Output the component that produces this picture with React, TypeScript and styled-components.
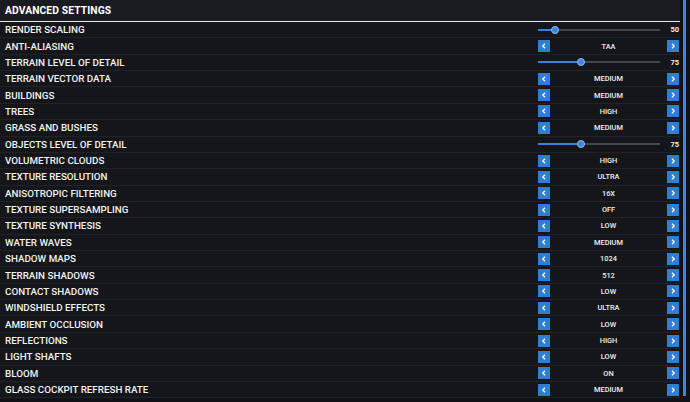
import React from "react";
import styled, { createGlobalStyle } from "styled-components";

const GlobalStyle = createGlobalStyle`
  html, body {
    margin: 0;
    padding: 0;
    background: #111215;
  }
  body {
    font-family: Roboto, "Liberation Sans", sans-serif;
    color: #fff;
  }
`;

type Setting =
  | { label: string; kind: "slider"; value: number; pos: number }
  | { label: string; kind: "select"; value: string };

const settings: Setting[] = [
  { label: "RENDER SCALING", kind: "slider", value: 50, pos: 14 },
  { label: "ANTI-ALIASING", kind: "select", value: "TAA" },
  { label: "TERRAIN LEVEL OF DETAIL", kind: "slider", value: 75, pos: 35.5 },
  { label: "TERRAIN VECTOR DATA", kind: "select", value: "MEDIUM" },
  { label: "BUILDINGS", kind: "select", value: "MEDIUM" },
  { label: "TREES", kind: "select", value: "HIGH" },
  { label: "GRASS AND BUSHES", kind: "select", value: "MEDIUM" },
  { label: "OBJECTS LEVEL OF DETAIL", kind: "slider", value: 75, pos: 35.5 },
  { label: "VOLUMETRIC CLOUDS", kind: "select", value: "HIGH" },
  { label: "TEXTURE RESOLUTION", kind: "select", value: "ULTRA" },
  { label: "ANISOTROPIC FILTERING", kind: "select", value: "16X" },
  { label: "TEXTURE SUPERSAMPLING", kind: "select", value: "OFF" },
  { label: "TEXTURE SYNTHESIS", kind: "select", value: "LOW" },
  { label: "WATER WAVES", kind: "select", value: "MEDIUM" },
  { label: "SHADOW MAPS", kind: "select", value: "1024" },
  { label: "TERRAIN SHADOWS", kind: "select", value: "512" },
  { label: "CONTACT SHADOWS", kind: "select", value: "LOW" },
  { label: "WINDSHIELD EFFECTS", kind: "select", value: "ULTRA" },
  { label: "AMBIENT OCCLUSION", kind: "select", value: "LOW" },
  { label: "REFLECTIONS", kind: "select", value: "HIGH" },
  { label: "LIGHT SHAFTS", kind: "select", value: "LOW" },
  { label: "BLOOM", kind: "select", value: "ON" },
  { label: "GLASS COCKPIT REFRESH RATE", kind: "select", value: "MEDIUM" },
];

const Screen = styled.div`
  width: 690px;
  height: 402px;
  display: flex;
  overflow: hidden;
  background: #111215;
`;

const Panel = styled.div`
  width: 680px;
  display: flex;
  flex-direction: column;
`;

const Header = styled.div`
  height: 21px;
  display: flex;
  align-items: center;
  padding-left: 5px;
  background: #1a1b20;
  border-bottom: 1px solid #e6e6e6;
  font-size: 10.3px;
  font-weight: 700;
  letter-spacing: 0.1px;
`;

const List = styled.div`
  display: flex;
  flex-direction: column;
`;

const Row = styled.div`
  height: 15.36px;
  display: flex;
  align-items: center;
  border-bottom: 1px solid #222328;
  background: #151619;
`;

const Label = styled.div`
  flex: 1;
  padding-left: 5px;
  font-size: 9.8px;
  font-weight: 500;
  color: #f2f2f2;
  white-space: nowrap;
`;

const Control = styled.div`
  width: 141px;
  margin-right: 1px;
  display: flex;
  align-items: center;
`;

const ArrowButton = styled.div`
  width: 12px;
  height: 12px;
  background: #2f7ed6;
  display: flex;
  align-items: center;
  justify-content: center;
`;

const Value = styled.div`
  flex: 1;
  text-align: center;
  font-size: 7.4px;
  font-weight: 500;
  color: #f0f0f0;
`;

const Track = styled.div`
  position: relative;
  width: 122px;
  height: 2px;
  background: #45464b;
`;

const Fill = styled.div`
  height: 100%;
  background: #3b82d6;
`;

const Thumb = styled.div`
  position: absolute;
  top: -3px;
  width: 8px;
  height: 8px;
  margin-left: -4px;
  border-radius: 50%;
  background: #3d86db;
  box-sizing: border-box;
  border: 1px solid #8fbcf0;
`;

const SliderValue = styled.div`
  flex: 1;
  text-align: right;
  font-size: 7.5px;
  font-weight: 700;
  color: #f0f0f0;
`;

const Scrollbar = styled.div`
  width: 10px;
  display: flex;
  padding-left: 3px;
  box-sizing: border-box;
`;

const ScrollThumb = styled.div`
  width: 3px;
  height: 396px;
  background: #3a86e0;
`;

const Chevron = ({ dir }: { dir: "left" | "right" }) => (
  <svg width="6" height="6" viewBox="0 0 6 6">
    <path
      d={dir === "left" ? "M4 0.8 L1.8 3 L4 5.2" : "M2 0.8 L4.2 3 L2 5.2"}
      fill="none"
      stroke="#fff"
      strokeWidth="1.3"
    />
  </svg>
);

export default function App() {
  return (
    <Screen>
      <GlobalStyle />
      <Panel>
        <Header>ADVANCED SETTINGS</Header>
        <List>
          {settings.map((s) => (
            <Row key={s.label}>
              <Label>{s.label}</Label>
              <Control>
                {s.kind === "slider" ? (
                  <>
                    <Track>
                      <Fill style={{ width: `${s.pos}%` }} />
                      <Thumb style={{ left: `${s.pos}%` }} />
                    </Track>
                    <SliderValue>{s.value}</SliderValue>
                  </>
                ) : (
                  <>
                    <ArrowButton>
                      <Chevron dir="left" />
                    </ArrowButton>
                    <Value>{s.value}</Value>
                    <ArrowButton>
                      <Chevron dir="right" />
                    </ArrowButton>
                  </>
                )}
              </Control>
            </Row>
          ))}
        </List>
      </Panel>
      <Scrollbar>
        <ScrollThumb />
      </Scrollbar>
    </Screen>
  );
}
